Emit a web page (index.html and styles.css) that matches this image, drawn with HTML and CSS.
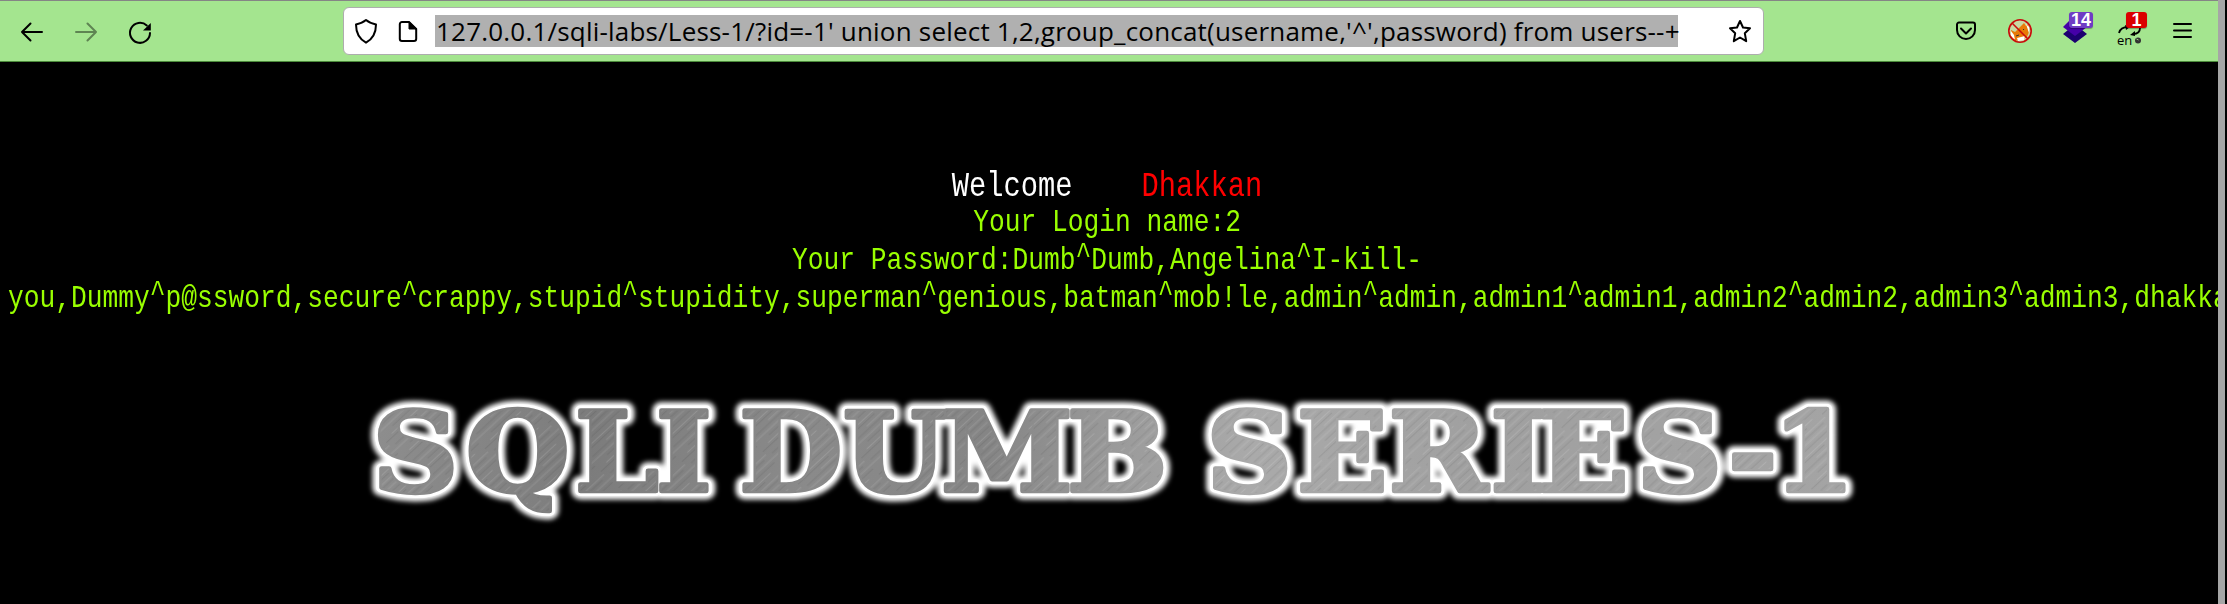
FILE: index.html
```html
<!DOCTYPE html>
<html lang="en">
<head>
<meta charset="utf-8">
<title>Less-1</title>
<link rel="stylesheet" href="styles.css">
</head>
<body>
<div class="window">
  <header class="toolbar">
    <nav class="nav">
      <svg class="ic" width="32" height="32" viewBox="0 0 32 32"><path d="M26 17H6M14.500 8.500L6 17l8.500 8.500"/></svg>
      <svg class="ic dim" width="32" height="32" viewBox="0 0 32 32"><path d="M6 17h20M17.500 8.500L26 17l-8.500 8.500"/></svg>
      <svg class="ic" width="32" height="32" viewBox="0 0 32 32"><path d="M26 18A10 10 0 1 1 22.800 10.500"/><path d="M26.800 8v7.500H19z" fill="#000" stroke="none"/></svg>
    </nav>
    <div class="urlbar">
      <svg class="ic shield" width="26" height="30" viewBox="0 0 26 30"><path d="M13 4c3 2.500 6 3.500 10 4.500 0 8-2.500 14-10 18.200C5.500 22.500 3 16.500 3 8.500 7 7.500 10 6.500 13 4z"/></svg>
      <svg class="ic page" width="20" height="30" viewBox="0 0 20 30"><path d="M11 6H4a2.200 2.200 0 0 0-2.200 2.200v14.600A2.200 2.200 0 0 0 4 25h12a2.200 2.200 0 0 0 2.200-2.200V13z"/><path d="M11 6v7h7z" fill="#000" stroke-width="1"/></svg>
      <span class="url">127.0.0.1/sqli-labs/Less-1/?id=-1' union select 1,2,group_concat(username,'^',password) from users--+</span>
      <svg class="ic star" width="26" height="28" viewBox="0 0 26 28"><path d="M13 4l3 6.500 7 .8-5.200 4.900 1.400 8L13 20.500 6.800 24.200l1.400-8L3 11.300l7-.8z"/></svg>
    </div>
    <div class="tools">
      <svg class="ic" width="24" height="28" viewBox="0 0 24 28"><path d="M4 5.500h14a2 2 0 0 1 2 2V13a9 9 0 0 1-18 0V7.500a2 2 0 0 1 2-2z"/><path d="M6 11.500l5 5 5-5"/></svg>
      <svg width="26" height="28" viewBox="0 0 26 28"><circle cx="12" cy="14" r="11" fill="#c9d8a5"/><path d="M3 13l4 2 9-9 2 3 2-2 1 8-2 5-5 3-8 1-3-5z" fill="#e87a08"/><path d="M3 14l3 4 1 5-4-4zM9 21l8-2-1 4-6 1zM18 7l3 3v6z" fill="#fff"/><path d="M15 12l1 1M8 19l3-1" stroke="#333"/><circle cx="12" cy="14" r="11.200" fill="none" stroke="#c90c0c" stroke-width="1.600"/><path d="M4 6l16 16" stroke="#c90c0c" stroke-width="1.600"/></svg>
      <span class="ext"><svg width="26" height="28" viewBox="0 0 26 28"><path d="M0 17l5-4 7 3 7-3 5 4-12 9z" fill="#1c0070"/><path d="M0 10l6-6h12l6 6-12 9z" fill="#4500a8"/></svg><b class="badge violet">14</b></span>
      <span class="ext"><svg width="28" height="28" viewBox="0 0 28 28"><path d="M2 16c1-4 4-6 9-6M23 11c0 4-3 6-7 6" fill="none" stroke="#000" stroke-width="1.800"/><path d="M13 18l5-4v5zM8 8l5 2-4 3z"/><circle cx="21" cy="23.500" r="3" fill="#333"/><path d="M19.500 22l2 1" stroke="#9ccf85"/></svg><i class="lang">en</i><b class="badge red">1</b></span>
      <svg class="ic" width="20" height="28" viewBox="0 0 20 28"><path d="M1 7h17M1 13.500h17M1 20h17"/></svg>
    </div>
  </header>
  <main class="page-body">
    <div class="line welcome"><span class="narrow">Welcome&nbsp;&nbsp;&nbsp;&nbsp;<span class="name">Dhakkan</span></span></div>
    <div class="line"><span class="narrow">Your Login name:2</span></div>
    <div class="line"><span class="narrow">Your Password:Dumb<span class="caret">^</span>Dumb,Angelina<span class="caret">^</span>I-kill-</span></div>
    <div class="line long"><span class="narrow">you,Dummy<span class="caret">^</span>p@ssword,secure<span class="caret">^</span>crappy,stupid<span class="caret">^</span>stupidity,superman<span class="caret">^</span>genious,batman<span class="caret">^</span>mob!le,admin<span class="caret">^</span>admin,admin1<span class="caret">^</span>admin1,admin2<span class="caret">^</span>admin2,admin3<span class="caret">^</span>admin3,dhakkan</span></div>
    <svg class="banner" width="1520" height="150" viewBox="350 380 1520 150">
      <defs>
        <linearGradient id="metal" gradientUnits="userSpaceOnUse" x1="343" y1="400" x2="1704" y2="500">
          <stop offset="0" stop-color="#8e8e8e"/><stop offset=".15" stop-color="#7c7c7c"/><stop offset=".3" stop-color="#8a8a8a"/><stop offset=".42" stop-color="#858585"/><stop offset=".5" stop-color="#999"/><stop offset=".6" stop-color="#aaa"/><stop offset=".75" stop-color="#a0a0a0"/><stop offset="1" stop-color="#a4a4a4"/>
        </linearGradient>
        <pattern id="brush" width="23" height="60" patternUnits="userSpaceOnUse" patternTransform="rotate(45)">
          <path d="M2 0v60M11 10v40M18 0v34" stroke="#fff" stroke-opacity=".12"/><path d="M6 0v44M14 20v40M21 5v50" stroke="#000" stroke-opacity=".08"/>
        </pattern>
        <filter id="soft" x="-5%" y="-30%" width="110%" height="160%"><feGaussianBlur stdDeviation="2.600"/></filter>
        <text id="title" class="title" y="491.500" x="345 431.500 532.500 607.500 648 684.500 780.500 871.500 988 1074 1117 1201 1286 1380 1424 1515 1600 1641">SQLI DUMB SERIES-1</text>
      </defs>
      <g transform="scale(1.08 1)">
        <use href="#title" class="glow" filter="url(#soft)"/>
        <use href="#title" class="rim"/>
        <use href="#title" class="face"/>
        <use href="#title" class="grain"/>
      </g>
    </svg>
  </main>
</div>
</body>
</html>
```
FILE: styles.css
```css
body { margin: 0; background: #000; overflow: hidden; }
.window { width: 2218px; height: 604px; border-right: 7px solid #a6a6a6; overflow: hidden; }
.toolbar { box-sizing: border-box; height: 62px; background: #a4e58f; border-top: 1px solid #858585; border-bottom: 1px solid #4c8c3b; display: flex; align-items: center; }
.nav { display: flex; gap: 22px; width: 343px; box-sizing: border-box; padding-left: 16px; }
.ic { fill: none; stroke: #000; stroke-width: 2; stroke-linecap: round; stroke-linejoin: round; flex: none; }
.dim { opacity: .42; }
.urlbar { box-sizing: border-box; width: 1421px; height: 48px; border: 1px solid #adadad; border-radius: 6px; background: #fff; display: flex; align-items: center; padding-left: 9px; }
.page { margin-left: 19px; }
.url { box-sizing: border-box; flex: none; width: 1243px; height: 32px; margin: 0 49px 0 17px; padding-left: 1px; background: #b0b0b0; font: 26px/33px "Open Sans", sans-serif; letter-spacing: .2px; white-space: nowrap; }
.tools { display: flex; align-items: center; margin-left: 191px; }
.tools > :nth-child(2) { margin-left: 29px; }
.tools > :nth-child(3) { margin-left: 29px; }
.tools > :nth-child(4) { margin-left: 28px; }
.tools > :nth-child(5) { margin-left: 28px; }
.ext { position: relative; height: 28px; }
.badge { position: absolute; top: -5px; height: 16px; border-radius: 3px; color: #fff; font: bold 18px/16px "Liberation Sans", sans-serif; text-align: center; box-shadow: 0 1px 1px rgba(0,0,0,.3); }
.violet { left: 6px; width: 24px; background: #6f3cc4; }
.red { left: 9px; width: 21px; background: #db0000; }
.lang { position: absolute; left: 0; bottom: -2px; font: 13px/14px "Open Sans", sans-serif; }
.page-body { padding-top: 106px; }
.line { height: 38px; display: flex; justify-content: center; white-space: pre; color: #9f0; font: 32px/38px "Liberation Mono", monospace; padding-right: 3px; }
.narrow { transform: scaleX(.8202); }
.welcome { height: 36px; color: #fff; font-size: 35px; }
.welcome .narrow { transform: scaleX(.8213); }
.name { color: #f00; }
.caret { position: relative; top: -5px; }
.long { justify-content: flex-start; padding-left: 8px; }
.long .narrow { transform-origin: left; }
.banner { display: block; margin: 62px 0 0 350px; }
.title { font: bold 110px "DejaVu Serif", serif; stroke-linejoin: round; }
.glow { fill: #fff; stroke: #fff; stroke-width: 17px; }
.rim { fill: #fff; stroke: #fff; stroke-width: 10px; }
.face { fill: url(#metal); stroke: url(#metal); stroke-width: 4.5px; }
.grain { fill: url(#brush); }
```
